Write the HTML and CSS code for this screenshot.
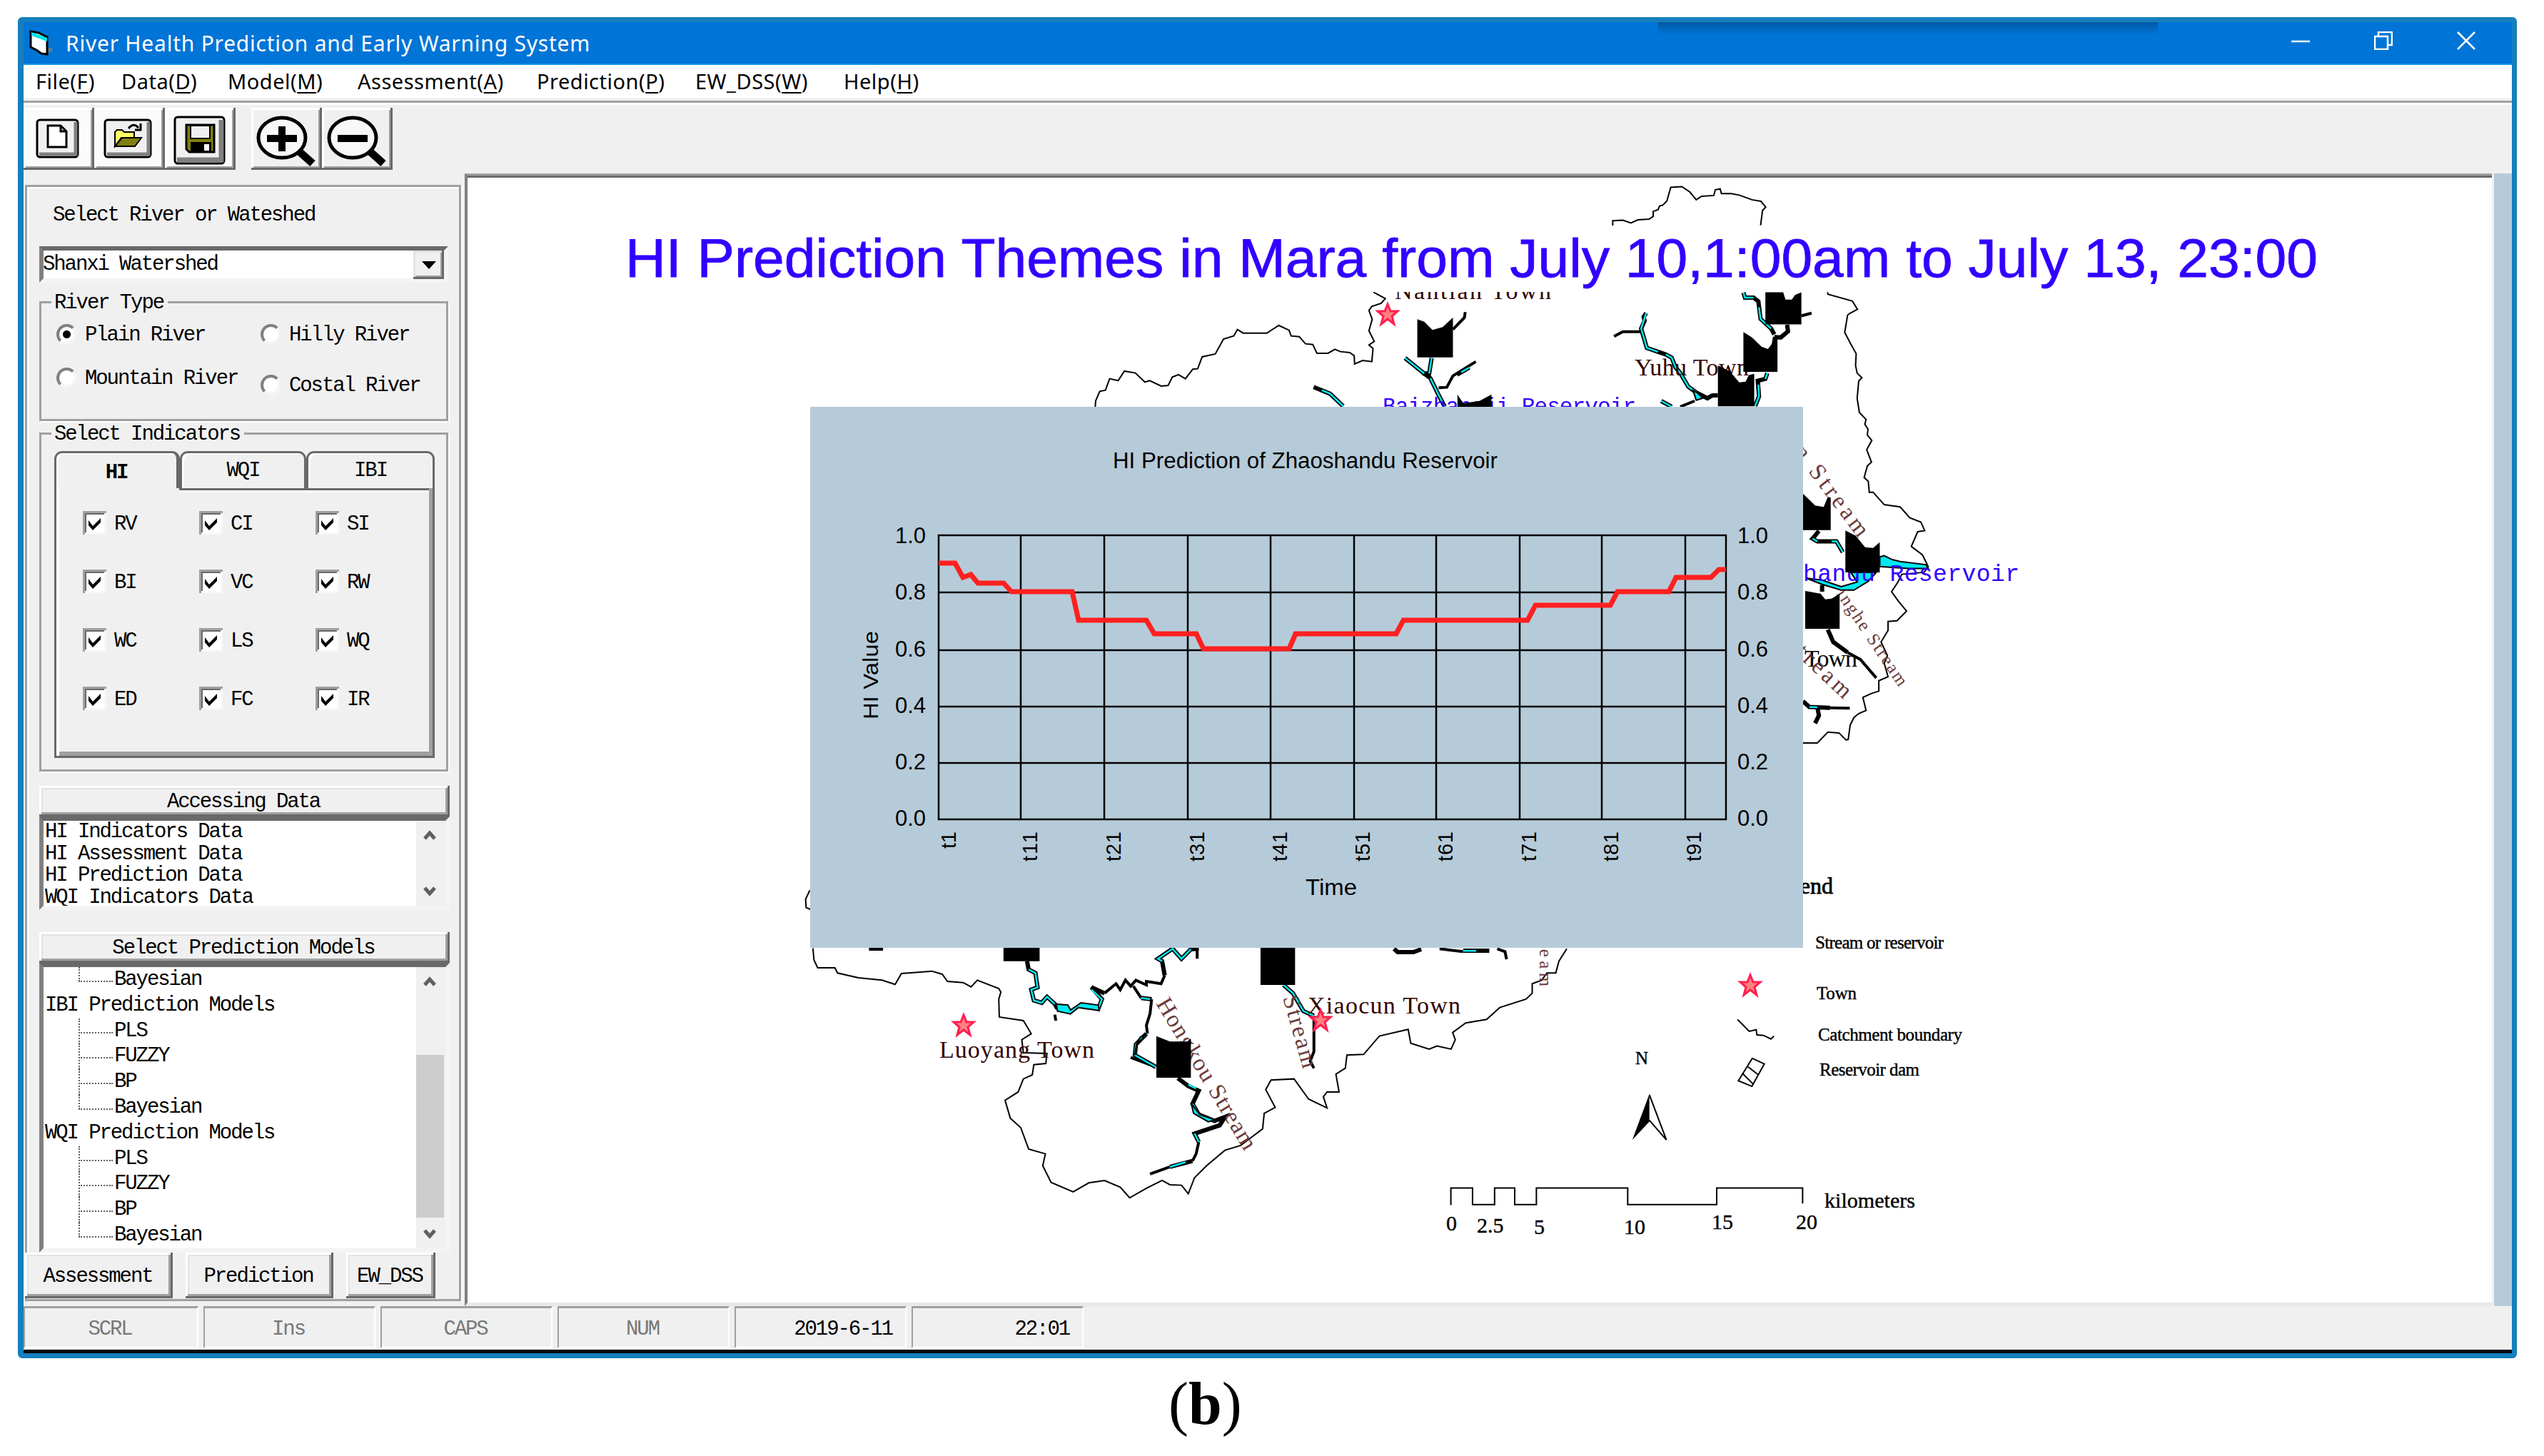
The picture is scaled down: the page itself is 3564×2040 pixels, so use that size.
FILE: index.html
```html
<!doctype html>
<html lang="en">
  <head>
    <meta charset="UTF-8" />
    <title>River Health Prediction and Early Warning System</title>
    <link rel="stylesheet" href="styles.css">
  </head>
  <body>
    <div class="window">
      <div class="titlebar">
        <svg class="app-icon" width="34" height="36" viewBox="0 0 34 36">
          <path d="M2 2 L13 4 L25 10 V34 L17 33 L10 28 L2 24 Z" fill="#fff" stroke="#000" stroke-width="3" />
          <path d="M3 3 L25 11 V16 L3 8 Z" fill="#00e5e5" />
          <path d="M27 25 h5 v6 h-5 z" fill="#777" />
        </svg>
        <span class="title">River Health Prediction and Early Warning System</span>
        <div class="tab-shadow"></div>
        <div class="window-buttons">
          <svg width="26" height="26" viewBox="0 0 26 26"><path d="M0 14 H26" /></svg>
          <svg width="26" height="26" viewBox="0 0 26 26"><path d="M1 7 H19 V25 H1 Z M6 7 V1 H25 V19 H19" /></svg>
          <svg width="26" height="26" viewBox="0 0 26 26"><path d="M1 1 L25 25 M25 1 L1 25" /></svg>
        </div>
      </div>

      <div class="menubar">
        <span class="m-file">File(<u>F</u>)</span>
        <span class="m-data">Data(<u>D</u>)</span>
        <span class="m-model">Model(<u>M</u>)</span>
        <span class="m-assess">Assessment(<u>A</u>)</span>
        <span class="m-pred">Prediction(<u>P</u>)</span>
        <span class="m-dss">EW_DSS(<u>W</u>)</span>
        <span class="m-help">Help(<u>H</u>)</span>
      </div>

      <div class="toolbar">
        <button class="tool light">
          <svg width="99" height="87" viewBox="0 0 99 87">
            <rect x="19" y="17" width="57" height="52" rx="4" fill="#f0f0f0" stroke="#000" stroke-width="3" />
            <path d="M22 65 H73 V20" fill="none" stroke="#808080" stroke-width="5" />
            <path d="M34 25 H52 L60 33 V55 H34 Z M52 25 V33 H60" fill="#fff" stroke="#000" stroke-width="3" />
          </svg>
        </button>
        <button class="tool light">
          <svg width="99" height="87" viewBox="0 0 99 87">
            <rect x="15" y="17" width="64" height="52" rx="4" fill="#f0f0f0" stroke="#000" stroke-width="3" />
            <path d="M18 65 H76 V20" fill="none" stroke="#808080" stroke-width="5" />
            <path d="M29 54 V34 L32 31 H39 L42 34 H56 V42 H38 Z" fill="#ffff66" stroke="#000" stroke-width="2" />
            <path d="M29 54 L39 42 H66 L57 54 Z" fill="#808010" stroke="#000" stroke-width="2" />
            <path d="M48 29 Q55 20 62 28 M65 22 V31 H57" fill="none" stroke="#000" stroke-width="3" />
          </svg>
        </button>
        <button class="tool light">
          <svg width="99" height="87" viewBox="0 0 99 87">
            <rect x="14" y="13" width="69" height="65" rx="4" fill="#f0f0f0" stroke="#000" stroke-width="3" />
            <path d="M17 73 H79 V17" fill="none" stroke="#808080" stroke-width="7" />
            <path d="M30 24 H69 V62 H34 L30 58 Z" fill="#808010" stroke="#000" stroke-width="3" />
            <path d="M36 25 H63 V43 H36 Z" fill="#f0f0f0" stroke="#000" stroke-width="2" />
            <path d="M36 48 H65 V62 H36 Z" fill="#000" />
            <path d="M55 51 H62 V60 H55 Z" fill="#fff" />
          </svg>
        </button>
        <button class="tool zoom">
          <svg width="99" height="87" viewBox="0 0 99 87">
            <path d="M68 62 L86 78" stroke="#000" stroke-width="11" />
            <ellipse cx="43" cy="42" rx="33" ry="28" fill="#f8f8f8" stroke="#000" stroke-width="5" />
            <path d="M22 43 H64 M43 26 V61" stroke="#000" stroke-width="10" />
          </svg>
        </button>
        <button class="tool">
          <svg width="99" height="87" viewBox="0 0 99 87">
            <path d="M68 62 L86 78" stroke="#000" stroke-width="11" />
            <ellipse cx="43" cy="42" rx="33" ry="28" fill="#f8f8f8" stroke="#000" stroke-width="5" />
            <path d="M22 43 H64" stroke="#000" stroke-width="10" />
          </svg>
        </button>
      </div>

      <div class="workspace">
        <div class="sidebar">
          <div class="field-label">Select River or Wateshed</div>
          <div class="combo">
            <span>Shanxi Watershed</span>
            <div class="combo-arrow"><svg width="20" height="11" viewBox="0 0 20 11"><path d="M0 0 H20 L10 11 Z" /></svg></div>
          </div>

          <fieldset class="river-type">
            <legend>River Type</legend>
            <div class="radios">
              <div class="radio-col">
                <label><i class="radio checked"></i>Plain River</label>
                <label><i class="radio"></i>Mountain River</label>
              </div>
              <div class="radio-col wide">
                <label><i class="radio"></i>Hilly River</label>
                <label><i class="radio"></i>Costal River</label>
              </div>
            </div>
          </fieldset>

          <fieldset class="indicators">
            <legend>Select Indicators</legend>
            <div class="tabs">
              <div class="tab active">HI</div>
              <div class="tab">WQI</div>
              <div class="tab">IBI</div>
            </div>
            <div class="tab-page">
              <label><svg class="check" viewBox="0 0 33 33"><path d="M8 13 L14 21 L25 10 V16 L14 27 L8 20 Z" /></svg>RV</label>
              <label><svg class="check" viewBox="0 0 33 33"><path d="M8 13 L14 21 L25 10 V16 L14 27 L8 20 Z" /></svg>CI</label>
              <label><svg class="check" viewBox="0 0 33 33"><path d="M8 13 L14 21 L25 10 V16 L14 27 L8 20 Z" /></svg>SI</label>
              <label><svg class="check" viewBox="0 0 33 33"><path d="M8 13 L14 21 L25 10 V16 L14 27 L8 20 Z" /></svg>BI</label>
              <label><svg class="check" viewBox="0 0 33 33"><path d="M8 13 L14 21 L25 10 V16 L14 27 L8 20 Z" /></svg>VC</label>
              <label><svg class="check" viewBox="0 0 33 33"><path d="M8 13 L14 21 L25 10 V16 L14 27 L8 20 Z" /></svg>RW</label>
              <label><svg class="check" viewBox="0 0 33 33"><path d="M8 13 L14 21 L25 10 V16 L14 27 L8 20 Z" /></svg>WC</label>
              <label><svg class="check" viewBox="0 0 33 33"><path d="M8 13 L14 21 L25 10 V16 L14 27 L8 20 Z" /></svg>LS</label>
              <label><svg class="check" viewBox="0 0 33 33"><path d="M8 13 L14 21 L25 10 V16 L14 27 L8 20 Z" /></svg>WQ</label>
              <label><svg class="check" viewBox="0 0 33 33"><path d="M8 13 L14 21 L25 10 V16 L14 27 L8 20 Z" /></svg>ED</label>
              <label><svg class="check" viewBox="0 0 33 33"><path d="M8 13 L14 21 L25 10 V16 L14 27 L8 20 Z" /></svg>FC</label>
              <label><svg class="check" viewBox="0 0 33 33"><path d="M8 13 L14 21 L25 10 V16 L14 27 L8 20 Z" /></svg>IR</label>
            </div>
          </fieldset>

          <button class="btn header-btn">Accessing Data</button>
          <div class="list data-list">
            <div class="rows">
              <div>HI Indicators Data</div>
              <div>HI Assessment Data</div>
              <div>HI Prediction Data</div>
              <div>WQI Indicators Data</div>
            </div>
            <div class="scrollbar">
              <svg width="18" height="16" viewBox="0 0 18 16"><path d="M2 13 L9 5 L16 13" /></svg>
              <svg width="18" height="16" viewBox="0 0 18 16"><path d="M2 3 L9 11 L16 3" /></svg>
            </div>
          </div>

          <button class="btn header-btn models-btn">Select Prediction Models</button>
          <div class="list tree">
            <div class="rows">
              <div class="leaf last">Bayesian</div>
              <div>IBI Prediction Models</div>
              <div class="leaf">PLS</div>
              <div class="leaf">FUZZY</div>
              <div class="leaf">BP</div>
              <div class="leaf last">Bayesian</div>
              <div>WQI Prediction Models</div>
              <div class="leaf">PLS</div>
              <div class="leaf">FUZZY</div>
              <div class="leaf">BP</div>
              <div class="leaf last">Bayesian</div>
            </div>
            <div class="scrollbar">
              <svg width="18" height="16" viewBox="0 0 18 16"><path d="M2 13 L9 5 L16 13" /></svg>
              <div class="thumb"></div>
              <svg width="18" height="16" viewBox="0 0 18 16"><path d="M2 3 L9 11 L16 3" /></svg>
            </div>
          </div>

          <div class="actions">
            <button class="btn">Assessment</button>
            <button class="btn">Prediction</button>
            <button class="btn small">EW_DSS</button>
          </div>
        </div>

        <div class="map">
          <svg class="map-svg" viewBox="655 250 2836 1575">
            <defs>
              <path id="star" d="M0 -15 L4 -5 L14 -5 L6 2 L9 13 L0 6 L-9 13 L-6 2 L-14 -5 L-4 -5 Z" />
            </defs>

            <!-- north-east part of the catchment -->
            <g transform="translate(2200 230) scale(.4464 .5421)">
              <path class="boundary" d="M133 159 V146 L165 145 190 152 212 144 247 142 260 135 260 122 275 118 280 108 290 106 303 95 315 60 350 58 375 72 395 92 412 83 450 81 455 66 470 64 474 76 505 76 530 80 570 92 598 96 613 111 603 120 597 158" />
              <path class="boundary" d="M807 331 L808 336 885 354 901 375 876 386 870 390 861 435 880 465 897 490 895 520 900 540 915 552 905 560 900 605 907 642 928 660 924 672 934 685 932 700 946 714 930 738 945 770 932 780 922 810 935 820 938 848 950 848 985 880 1035 886 1065 914 1100 925 1112 947 1090 950 1070 988 1105 1010 1123 1040 1110 1055 1040 1060 1028 1080 1008 1105 1030 1130 1055 1155 1025 1180 997 1182 997 1205 975 1235 995 1270 985 1290 997 1325 968 1335 968 1362 945 1368 918 1378 928 1412 905 1420 890 1430 878 1450 872 1487 865 1488 843 1470 808 1468 775 1496 730 1496" />
              <g id="ne-rivers">
                <path class="river" d="M238 385 L230 395 233 405 222 425 240 475 275 485 300 492 318 500 330 525 345 540 370 575 395 590 430 605 445 598 463 597 M543 332 L548 345 575 345 590 355 597 400 630 425 640 440 M618 540 L612 555 588 560 592 600 580 625 M680 415 L683 432 660 448 640 447 M285 612 L318 627 M780 948 L760 968 775 975 835 975 855 1003 M790 1088 V1105 M808 1203 L825 1235 870 1262 M730 1388 L750 1403 815 1405 M775 1403 L780 1425 768 1445" />
                <path class="river-in" d="M238 385 L222 425 240 475 275 485 M300 492 L318 500 330 525 345 540 370 575 395 590 M543 332 L548 345 575 345 M592 370 L597 400 630 425 M618 540 L612 555 M590 570 L592 600 580 625 M285 612 L318 627 M760 968 L775 975 M820 975 L835 975 855 1003 M750 1403 L775 1404" />
                <path class="river thin" d="M137 445 L165 433 222 433 M345 627 L390 612 M725 392 L757 385 M870 1262 L910 1280 960 1328 M815 1405 L877 1406" />
              </g>
              <path class="lake" d="M971 1015 L985 1012 1010 1022 1035 1027 1115 1035 1123 1045 1060 1045 971 1040 Z M740 1070 L790 1075 850 1092 900 1080 880 1055 960 1055 935 1078 890 1101 850 1101 790 1086 Z M385 585 L400 592 415 605 395 610 Z" />
            </g>

            <!-- northern boundary -->
            <g transform="translate(1450 240) scale(.574 .3333)">
              <path class="boundary" d="M147 990 L148 965 158 925 172 920 182 872 203 880 218 840 245 848 268 886 280 880 308 903 325 900 335 865 350 855 367 872 385 832 397 830 408 780 440 768 460 705 485 692 494 665 508 680 566 680 595 648 620 668 625 692 645 695 660 725 678 728 688 765 715 765 732 748 745 758 768 762 779 775 780 810 800 795 822 800 825 745 815 730 828 715 815 670 823 622 815 585 822 568 845 555 855 535 826 508" />
              <path class="river thin" d="M1050 592 L1048 615 1020 665 M1076 800 L1020 860 1005 908 985 910" />
              <path class="river" d="M903 785 L950 850 965 870 985 940 1000 990 M968 785 L962 850 945 850 M1060 825 L1030 855 M680 907 L720 935 752 987" />
              <path class="river-in" d="M903 785 L950 850 M965 870 L985 940 1000 990 M968 785 L962 850 M1060 825 L1040 845 M700 920 L720 935 752 987" />
            </g>

            <!-- southern part -->
            <g transform="translate(1100 1200) scale(.7334 .3333)">
              <path class="boundary" d="M47 142 L39 180 40 215 48 222 M53 386 L55 435 62 468 95 468 100 490 140 510 185 520 210 538 222 492 280 482 300 495 310 525 340 530 355 548 367 520 408 555 412 570 408 600 409 675 455 690 470 745 452 770 455 825 500 828 498 870 475 875 472 918 455 935 445 990 420 1025 430 1100 450 1140 465 1230 497 1250 492 1300 508 1370 550 1410 580 1372 610 1362 640 1390 658 1435 690 1395 720 1362 735 1380 757 1382 770 1418 782 1350 805 1300 840 1235 870 1215 912 1145 915 1080 936 1055 918 980 928 940 972 935 1000 1020 1035 1057 1028 1010 1035 990 1058 990 1052 915 1070 890 1073 835 1105 832 1135 755 1190 727 1195 785 1230 810 1245 797 1272 810 1280 770 1275 740 1300 700 1340 685 1365 635 1415 600 1427 575 1427 535 1445 520 1455 490 1472 490 1478 440 1493 388" />
              <path class="river" d="M462 440 L465 475 478 490 482 550 470 560 475 605 490 615 500 590 515 620 520 640 M598 640 L605 600 585 550 610 575 M725 500 L720 440 712 430 740 388 757 430 775 390 790 388 M680 595 L700 600 M690 745 L670 790 668 835 708 885 M750 932 L770 965 790 985 778 1040 790 1085 820 1112 840 1095 830 1130 782 1165 790 1200 M778 1280 L735 1305 M952 540 L970 575 990 650 1010 670 M1163 388 L1170 402 1200 402 1215 390 M1295 396 H1345" />
              <path class="river thin" d="M515 665 L517 690 M610 575 L632 535 640 560 650 520 660 545 670 520 690 540 690 525 718 535 725 500 M787 388 V430 M665 545 L680 595 M700 600 L697 660 690 710 692 745 M708 885 L660 845 M790 1200 L785 1250 778 1280 M735 1305 L697 1335 M1010 670 V820 L1003 860 1010 890 M1250 388 L1295 400 M1360 388 L1375 400 1378 432 M160 390 H187" />
              <path class="river-in" d="M465 475 L478 490 482 550 470 560 475 605 490 615 500 590 515 620 M598 640 L605 600 585 560 M720 440 L712 430 740 388 757 430 775 390 M680 595 L697 600 M690 745 L670 790 668 835 708 885 M770 960 L785 975 M778 1040 L790 1085 820 1112 M782 1165 L790 1200 M765 1285 L735 1305 M952 540 L970 575 990 650 1010 670 M1295 397 H1320" />
              <path class="lake" d="M518 620 L540 625 545 645 565 615 598 625 600 648 560 635 545 662 520 650 Z M690 745 L678 760 671 790 668 835 672 790 Z M776 1040 L780 1080 808 1115 822 1108 792 1085 Z" />
            </g>

            <g class="place">
              <text x="1954" y="419" textLength="219">Nantian Town</text>
              <text x="2290" y="526" textLength="160">Yuhu Town</text>
              <text x="1316" y="1482" textLength="217">Luoyang Town</text>
              <text x="1832" y="1420" textLength="214">Xiaocun Town</text>
              <text class="dark" x="2528" y="934" textLength="74">Town</text>
              <text class="water narrow" x="1937" y="579" textLength="355">Baizhangji Reservoir</text>
              <text class="water" x="2425" y="814" textLength="404">Zhaoshandu Reservoir</text>
            </g>

            <g class="stream">
              <text transform="translate(2512 633) rotate(53)" textLength="150">n Stream</text>
              <text class="tiny" transform="translate(2572 832) rotate(56)" textLength="156">inghe Stream</text>
              <text transform="translate(2514 916) rotate(43)" textLength="92">tream</text>
              <text transform="translate(1619 1406) rotate(59)" textLength="240">Hongkou Stream</text>
              <text transform="translate(1797 1398) rotate(74)" textLength="102">Stream</text>
              <text class="tiny" transform="translate(2157 1304) rotate(90)" textLength="76">tream</text>
            </g>

            <!-- gauging sites -->
            <g class="site">
              <path transform="translate(2200 230) scale(.4464 .5421)" d="M612 331 H668 L675 350 H695 L705 338 725 331 V414 H612 Z M543 434 L570 448 600 472 620 478 632 465 636 445 650 452 V537 H543 Z M463 520 L500 535 530 564 550 562 560 545 577 542 V626 H463 Z M730 852 L768 882 795 886 808 860 817 862 V946 H730 Z M863 947 L895 960 925 990 950 992 971 977 V1055 H863 Z M737 1103 L785 1110 800 1125 820 1123 845 1110 V1201 H737 Z" />
              <path transform="translate(1450 240) scale(.574 .3333)" d="M933 622 L950 632 970 667 995 655 1020 615 V782 H933 Z M1031 938 L1045 975 1085 965 1114 938 V990 H1031 Z" />
              <path transform="translate(1100 1200) scale(.7334 .3333)" d="M417 380 H486 V440 H417 Z M908 380 H974 V540 H908 Z M709 755 L735 778 H768 L775 765 V930 H709 Z" />
            </g>

            <g class="stars">
              <use href="#star" x="1944" y="441" />
              <use href="#star" x="1350" y="1437" />
              <use href="#star" x="1850" y="1430" />
              <use href="#star" x="2452" y="1381" />
            </g>

            <!-- legend, north arrow and scale bar -->
            <g transform="translate(1980 1200) scale(.5421 .3571)">
              <path class="boundary" d="M838 640 L868 686 886 680 888 700 905 702 924 716 932 705" />
              <path class="boundary" d="M876 792 L907 814 875 902 840 880 Z M862 822 L890 855 M850 850 L878 893" />
              <path class="boundary" d="M610 935 L654 1112 610 1035" />
              <path d="M610 932 V1040 L566 1112 Z" />
              <path class="scale" d="M97 1368 V1301 H153 V1366 H210 V1301 H262 V1366 H318 V1301 H554 V1366 H784 V1301 H1006 V1362" />
            </g>
            <g class="legend">
              <text class="head" x="2568" y="1252" text-anchor="end">Legend</text>
              <text x="2543" y="1329" textLength="180">Stream or reservoir</text>
              <text x="2545" y="1400" textLength="56">Town</text>
              <text x="2547" y="1458" textLength="202">Catchment boundary</text>
              <text x="2549" y="1507" textLength="140">Reservoir dam</text>
              <text x="2291" y="1491">N</text>
              <g class="num">
                <text x="2026" y="1724">0</text>
                <text x="2069" y="1727">2.5</text>
                <text x="2149" y="1729">5</text>
                <text x="2275" y="1729">10</text>
                <text x="2398" y="1722">15</text>
                <text x="2516" y="1722">20</text>
                <text x="2556" y="1692" textLength="127" lengthAdjust="spacingAndGlyphs">kilometers</text>
              </g>
            </g>
          </svg>

          <div class="banner">
            <svg width="2836" height="93" viewBox="655 316 2836 93">
              <text x="876" y="388" textLength="2371" lengthAdjust="spacingAndGlyphs">HI Prediction Themes in Mara from July 10,1:00am to July 13, 23:00</text>
            </svg>
          </div>

          <div class="chart">
            <svg width="1391" height="758" viewBox="1135 570 1391 758">
              <path class="grid" d="M1315 750 H2418 V1148 H1315 Z M1315 830 H2418 M1315 911 H2418 M1315 990 H2418 M1315 1069 H2418 M1430 750 V1148 M1547 750 V1148 M1664 750 V1148 M1780 750 V1148 M1897 750 V1148 M2012 750 V1148 M2129 750 V1148 M2244 750 V1148 M2361 750 V1148" />
              <polyline class="series" points="1315,789 1338,789 1349,809 1360,805 1370,817 1406,817 1417,829 1502,829 1511,869 1606,869 1617,888 1676,888 1686,909 1806,909 1815,888 1956,888 1966,869 2140,869 2151,848 2256,848 2266,829 2338,829 2348,809 2397,809 2408,798 2418,798" />
              <text x="1559" y="656" textLength="539" lengthAdjust="spacingAndGlyphs">HI Prediction of Zhaoshandu Reservoir</text>
              <g text-anchor="end">
                <text x="1297" y="761">1.0</text>
                <text x="1297" y="840">0.8</text>
                <text x="1297" y="920">0.6</text>
                <text x="1297" y="999">0.4</text>
                <text x="1297" y="1078">0.2</text>
                <text x="1297" y="1157">0.0</text>
              </g>
              <g>
                <text x="2434" y="761">1.0</text>
                <text x="2434" y="840">0.8</text>
                <text x="2434" y="920">0.6</text>
                <text x="2434" y="999">0.4</text>
                <text x="2434" y="1078">0.2</text>
                <text x="2434" y="1157">0.0</text>
              </g>
              <text x="1829" y="1254" textLength="72" lengthAdjust="spacingAndGlyphs">Time</text>
              <text class="axis" transform="translate(1230 1008) rotate(-90)" textLength="124" lengthAdjust="spacingAndGlyphs">HI Value</text>
              <g class="ticks">
                <text transform="translate(1339 1189) rotate(-90)" textLength="24">t1</text>
                <text transform="translate(1453 1207) rotate(-90)" textLength="42">t11</text>
                <text transform="translate(1570 1207) rotate(-90)" textLength="42">t21</text>
                <text transform="translate(1687 1207) rotate(-90)" textLength="42">t31</text>
                <text transform="translate(1803 1207) rotate(-90)" textLength="42">t41</text>
                <text transform="translate(1919 1207) rotate(-90)" textLength="42">t51</text>
                <text transform="translate(2035 1207) rotate(-90)" textLength="42">t61</text>
                <text transform="translate(2152 1207) rotate(-90)" textLength="42">t71</text>
                <text transform="translate(2267 1207) rotate(-90)" textLength="42">t81</text>
                <text transform="translate(2383 1207) rotate(-90)" textLength="42">t91</text>
              </g>
            </svg>
          </div>
        </div>
        <div class="edge"></div>
      </div>

      <div class="statusbar">
        <div class="first">SCRL</div>
        <div>Ins</div>
        <div>CAPS</div>
        <div>NUM</div>
        <div class="info">2019-6-11</div>
        <div class="info">22:01</div>
      </div>
    </div>
    <p class="caption">(<b>b</b>)</p>
  </body>
</html>
```
FILE: styles.css
```css
* {
  box-sizing: border-box;
}
body {
  margin: 0;
  background: #fff;
  width: 3564px;
  height: 2040px;
  overflow: hidden;
}
.window {
  margin: 24px 0 0 25px;
  width: 3501px;
  height: 1879px;
  border: 7px solid #167fbd;
  border-left-width: 8px;
  border-bottom-width: 7px;
  border-radius: 6px;
  background: #f0f0f0;
  display: flex;
  flex-direction: column;
  font-family: "Liberation Mono", monospace;
  font-size: 29px;
  letter-spacing: -2.1px;
  color: #000;
}

/* title and menu */
.titlebar {
  position: relative;
  height: 60px;
  flex: none;
  background: #0074d7;
  border-bottom: 2px solid #1397e0;
  display: flex;
  align-items: center;
  padding: 0 51px 0 8px;
}
.title {
  margin: 0 auto 0 17px;
  font: 30px "Noto Sans", sans-serif;
  letter-spacing: 0.77px;
  color: #fff;
}
.tab-shadow {
  position: absolute;
  left: 2290px;
  top: 0;
  width: 700px;
  height: 18px;
  background: linear-gradient(#0058a4, #0074d7);
}
.window-buttons {
  display: flex;
  gap: 90px;
  margin-bottom: 6px;
}
.window-buttons path {
  fill: none;
  stroke: #fff;
  stroke-width: 2.5;
}
.menubar {
  height: 50px;
  flex: none;
  background: #fff;
  border-bottom: 4px solid #f0f0f0;
  display: flex;
  align-items: center;
  padding: 0 0 2px 17px;
  font: 29px "Noto Sans", sans-serif;
  letter-spacing: 0.5px;
}
.menubar span {
  white-space: nowrap;
}
.menubar u {
  text-underline-offset: 4px;
  text-decoration-thickness: 2px;
}
.m-file { width: 120px; }
.m-data { width: 149px; }
.m-model { width: 182px; }
.m-assess { width: 251px; }
.m-pred { width: 222px; }
.m-dss { width: 208px; }

/* toolbar */
.toolbar {
  height: 102px;
  flex: none;
  border-top: 3px solid #a0a0a0;
  box-shadow: inset 0 3px #fff;
  padding-top: 7px;
  display: flex;
}
.tool {
  width: 99px;
  height: 87px;
  padding: 0;
  border: 0;
  background: #f0f0f0;
  box-shadow: inset -3px -3px #696969, inset 3px 3px #fff, inset -5px -5px #a0a0a0;
}
.tool svg {
  display: block;
}
.light {
  background: #fbfbfb;
}
.zoom {
  margin-left: 22px;
}

/* sidebar */
.workspace {
  height: 1587px;
  flex: none;
  display: flex;
}
.sidebar {
  width: 611px;
  height: 1564px;
  flex: none;
  margin: 16px 5px 0 2px;
  border: 3px solid #a0a0a0;
  box-shadow: inset 2px 2px #fff, 2px 0 #fff;
  padding: 18px 14px 0 17px;
}
.field-label {
  height: 40px;
  line-height: 43px;
  padding-left: 19px;
}
.combo,
.list {
  background: #fff;
  border: 6px solid;
  border-color: #696969 #f4f4f4 #f4f4f4 #808080;
  display: flex;
}
.combo {
  height: 51px;
  width: 573px;
  margin-top: 25px;
  line-height: 40px;
  justify-content: space-between;
}
.combo span {
  margin-left: -1px;
}
.combo-arrow {
  width: 43px;
  height: 40px;
  background: #f0f0f0;
  box-shadow: inset -3px -3px #696969, inset 3px 3px #e3e3e3, inset -5px -5px #a0a0a0;
  display: flex;
  align-items: center;
  justify-content: center;
}
fieldset {
  margin: 0;
  padding: 0;
  width: 573px;
  border: 3px solid #a0a0a0;
  box-shadow: 2px 2px #fff;
  min-width: 0;
}
legend {
  margin-left: 14px;
  padding: 0 6px 0 4px;
  height: 36px;
  line-height: 39px;
}
.river-type {
  margin-top: 9px;
  height: 185px;
}
.radios {
  display: flex;
  padding: 7px 0 0 21px;
}
.radio-col {
  width: 286px;
  display: flex;
  flex-direction: column;
  gap: 21px;
  flex: none;
}
.radio-col.wide {
  gap: 31px;
}
.radio-col label {
  height: 40px;
  line-height: 44px;
  display: flex;
  white-space: nowrap;
}
.radio {
  width: 29px;
  height: 29px;
  margin: 6px 11px 0 0;
  border-radius: 50%;
  border: 4px solid;
  border-color: #808080 #f4f4f4 #f4f4f4 #808080;
  background: #fff;
}
.radio.checked {
  background: radial-gradient(circle, #000 5px, #fff 6px);
}
.indicators {
  height: 492px;
  margin-top: -1px;
}
.tabs {
  display: flex;
  margin: 7px 0 0 18px;
  width: 533px;
  height: 52px;
}
.tab {
  width: 177px;
  flex: none;
  border: 3px solid #696969;
  border-bottom: 0;
  border-radius: 11px 11px 0 0;
  box-shadow: inset 3px 2px #fff;
  text-align: center;
  line-height: 49px;
}
.tab:last-child {
  width: 180px;
}
.tab.active {
  width: 176px;
  font-weight: bold;
  line-height: 55px;
  border-right-width: 5px;
}
.tab-page {
  margin-left: 18px;
  width: 533px;
  height: 378px;
  border: solid #696969;
  border-width: 0 3px 3px;
  box-shadow: inset 4px 0 #fff, inset -5px -6px #a0a0a0;
  background: linear-gradient(#696969 3px, #fff 3px, #fff 6px, transparent 6px) 172px 0 no-repeat;
  padding: 32px 0 0 37px;
  display: grid;
  grid-template-columns: repeat(3, 163px);
  grid-template-rows: repeat(4, 82px);
}
.tab-page label {
  display: flex;
  height: 33px;
  line-height: 37px;
}
.check {
  width: 33px;
  height: 33px;
  margin-right: 11px;
  background: #fff;
  box-shadow: inset 3px 3px #a0a0a0, inset -3px -3px #f8f8f8, inset 5px 5px #696969;
}
.btn {
  font: inherit;
  letter-spacing: inherit;
  color: #000;
  padding: 2px 3px 0 0;
  border: 0;
  background: #f0f0f0;
  box-shadow: inset -3px -3px #696969, inset 3px 3px #fff, inset -6px -6px #a0a0a0, inset 5px 5px #e3e3e3;
}
.header-btn {
  display: block;
  width: 575px;
  height: 43px;
  margin-top: 20px;
}
.models-btn {
  margin-top: 31px;
}
.list {
  width: 575px;
  overflow: hidden;
}
.rows {
  flex: 1;
  padding: 1px 0 0 2px;
}
.data-list {
  height: 131px;
  line-height: 30.7px;
}
.tree {
  height: 406px;
  line-height: 35.8px;
}
.tree .rows {
  padding-top: 0;
}
.scrollbar {
  width: 41px;
  background: #f0f0f0;
  display: flex;
  flex-direction: column;
  align-items: center;
  justify-content: space-between;
  padding: 12px 4px 12px 0;
}
.scrollbar path {
  fill: none;
  stroke: #606060;
  stroke-width: 5;
}
.thumb {
  width: 39px;
  height: 228px;
  margin: 80px 0 0 2px;
  background: #cdcdcd;
}
.leaf {
  position: relative;
  padding-left: 97px;
}
.leaf::before,
.leaf::after {
  content: "";
  position: absolute;
  left: 47px;
}
.leaf::before {
  top: 0;
  height: 36px;
  border-left: 2px dotted #606060;
}
.leaf.last::before {
  height: 20px;
}
.leaf::after {
  top: 19px;
  width: 48px;
  border-top: 2px dotted #606060;
}
.actions {
  display: flex;
  gap: 18px;
  margin-left: -20px;
}
.actions .btn {
  width: 207px;
  height: 64px;
}
.actions .small {
  width: 125px;
}

/* map */
.map {
  position: relative;
  width: 2840px;
  height: 1587px;
  border: solid;
  border-width: 3px 0 5px 4px;
  border-color: #a0a0a0 #f0f0f0 #e8e8e8 #808080;
  box-shadow: inset 0 3px #696969;
  padding-top: 4px;
  background: #fff;
  flex: none;
}
.map-svg {
  display: block;
  width: 2836px;
  height: 1575px;
}
.map path {
  vector-effect: non-scaling-stroke;
}
.boundary,
.scale,
.river,
.river-in,
.grid,
.series {
  fill: none;
  stroke: #000;
  stroke-width: 2;
}
.river {
  stroke-width: 6;
}
.river.thin {
  stroke-width: 4;
}
.river-in {
  stroke: #00e8f0;
  stroke-width: 2.5;
}
.lake {
  fill: #00e8f0;
  stroke: #000;
  stroke-width: 2;
}
.place {
  font: 34px "Liberation Serif", serif;
  letter-spacing: 0;
  fill: #300;
}
.place .dark {
  fill: #000;
}
.place .water {
  font: 33px "Liberation Mono", monospace;
  fill: #3200ff;
}
.place .narrow {
  font-size: 31px;
}
.stream {
  font: 33px "Liberation Serif", serif;
  fill: #6b3a3a;
}
.stream .tiny {
  font-size: 25px;
}
.stars {
  fill: #ff8080;
  stroke: #ff2050;
  stroke-width: 3;
}
.legend {
  font: 25px "Liberation Serif", serif;
  letter-spacing: 0;
  stroke: #000;
  stroke-width: 0.4;
}
.legend .head {
  font-size: 32px;
  stroke-width: 0.8;
}
.legend .num {
  font-size: 30px;
}
.banner {
  position: absolute;
  left: 0;
  top: 70px;
  height: 93px;
  background: #fff;
}
.banner text {
  font: 76px "Liberation Sans", sans-serif;
  fill: #3200ff;
  stroke: #3200ff;
  stroke-width: 0.8;
}
.banner svg,
.chart svg {
  display: block;
  letter-spacing: 0;
}
.chart {
  position: absolute;
  left: 480px;
  top: 324px;
  width: 1391px;
  height: 758px;
  background: #b6cbd9;
  font: 31px "Liberation Sans", sans-serif;
}
.grid {
  stroke-width: 2.5;
}
.series {
  stroke: #ff2020;
  stroke-width: 7;
}
.axis,
.ticks {
  font-size: 29px;
}
.edge {
  margin-left: 3px;
  flex: 1;
  background: #b6cbd9;
}

/* status bar */
.statusbar {
  height: 66px;
  flex: none;
  border-bottom: 5px solid #050a10;
  display: flex;
  gap: 7px;
  color: #787878;
}
.statusbar div {
  width: 241px;
  height: 59px;
  border: 2px solid;
  border-color: #a0a0a0 #fff #fff #a0a0a0;
  border-top-width: 3px;
  text-align: center;
  line-height: 60px;
  padding-right: 3px;
}
.statusbar .first {
  width: 245px;
}
.statusbar .info {
  color: #000;
  text-align: right;
  padding-right: 18px;
}
.caption {
  margin: 16px 0 0 1637px;
  font: 84px/96px "Liberation Serif", serif;
}
```
